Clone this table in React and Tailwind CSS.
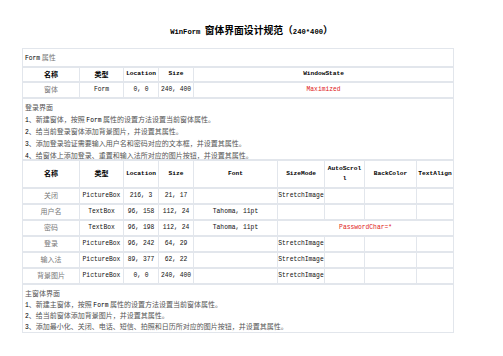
const cols = [57, 44, 35, 35, 84, 47, 40, 52, 37];

const rows = [
  ['关闭', 'PictureBox', '216, 3', '21, 17', '', 'StretchImage', '', '', ''],
  ['用户名', 'TextBox', '96, 158', '112, 24', 'Tahoma, 11pt', '', '', '', ''],
  ['密码', 'TextBox', '96, 198', '112, 24', 'Tahoma, 11pt', 'PasswordChar=*'],
  ['登录', 'PictureBox', '96, 242', '64, 29', '', 'StretchImage', '', '', ''],
  ['输入法', 'PictureBox', '89, 377', '62, 22', '', 'StretchImage', '', '', ''],
  ['背景图片', 'PictureBox', '0, 0', '240, 400', '', 'StretchImage', '', '', ''],
];

// Latin words inside Chinese lines
function Latin({ children }) {
  return <span className="font-['Liberation_Mono'] text-[6.3px] leading-none text-black">{children}</span>;
}

const cell = 'border-x border-y-2 border-[#e2e6ec] text-center align-middle p-0';
const latinCell = `${cell} font-['Liberation_Mono'] text-[6.3px] text-[#111]`;
const nameCell = `${cell} text-[7px] text-[#777]`;
const headCell = `${cell} font-bold text-[7px] text-black`;
const headLatin = `${cell} font-bold font-['Liberation_Mono'] text-[6.2px] text-black`;

export default function App() {
  return (
    <div className="w-[503px] h-[356px] bg-white font-['Noto_Sans_CJK_SC',sans-serif]">
      {/* Title */}
      <div className="pt-[24px] h-[48px] text-center text-[9.8px] leading-[12px] font-bold text-black">
        <span className="font-['Liberation_Mono'] text-[7.2px]">WinForm </span>
        窗体界面设计规范（<span className="font-['Liberation_Mono'] text-[7.2px]">240*400</span>）
      </div>

      <table className="ml-[22px] w-[431px] table-fixed border-collapse border border-[#e2e6ec]">
        <colgroup>
          {cols.map((w, i) => (
            <col key={i} style={{ width: w }} />
          ))}
        </colgroup>
        <tbody>
          <tr className="h-[18px]">
            <td colSpan={9} className="border border-[#e2e6ec] px-[2px] text-[7px] text-[#777]">
              <Latin>Form</Latin> 属性
            </td>
          </tr>
          <tr className="h-[15px]">
            <td className={headCell}>名称</td>
            <td className={headCell}>类型</td>
            <td className={headLatin}>Location</td>
            <td className={headLatin}>Size</td>
            <td colSpan={5} className={headLatin}>WindowState</td>
          </tr>
          <tr className="h-[16px]">
            <td className={nameCell}>窗体</td>
            <td className={latinCell}>Form</td>
            <td className={latinCell}>0, 0</td>
            <td className={latinCell}>240, 400</td>
            <td colSpan={5} className={`${latinCell} !text-[#e02020]`}>Maximized</td>
          </tr>
          <tr className="h-[60px]">
            <td colSpan={9} className="border border-[#e2e6ec] px-[2px] pt-[2px] text-[7px] leading-[12px] text-[#555] align-top">
              <div className="h-[12px]">登录界面</div>
              <div className="h-[12px]"><Latin>1</Latin>、新建窗体，按照 <Latin>Form</Latin> 属性的设置方法设置当前窗体属性。</div>
              <div className="h-[12px]"><Latin>2</Latin>、给当前登录窗体添加背景图片，并设置其属性。</div>
              <div className="h-[12px]"><Latin>3</Latin>、添加登录验证需要输入用户名和密码对应的文本框，并设置其属性。</div>
              <div className="h-[10px]"><Latin>4</Latin>、给窗体上添加登录、重置和输入法所对应的图片按钮，并设置其属性。</div>
            </td>
          </tr>
          <tr className="h-[28px]">
            <td className={headCell}>名称</td>
            <td className={headCell}>类型</td>
            <td className={headLatin}>Location</td>
            <td className={headLatin}>Size</td>
            <td className={headLatin}>Font</td>
            <td className={headLatin}>SizeMode</td>
            <td className={`${headLatin} leading-[10px]`}>
              AutoScrol
              <br />l
            </td>
            <td className={headLatin}>BackColor</td>
            <td className={headLatin}>TextAlign</td>
          </tr>
          {rows.map((r, i) => (
            <tr key={i} className="h-[16px]">
              <td className={nameCell}>{r[0]}</td>
              <td className={latinCell}>{r[1]}</td>
              <td className={latinCell}>{r[2]}</td>
              <td className={latinCell}>{r[3]}</td>
              <td className={latinCell}>{r[4]}</td>
              {r.length === 6 ? (
                <td colSpan={4} className={`${latinCell} !text-[#e02020]`}>{r[5]}</td>
              ) : (
                <>
                  <td className={latinCell}>{r[5]}</td>
                  <td className={latinCell}>{r[6]}</td>
                  <td className={latinCell}>{r[7]}</td>
                  <td className={latinCell}>{r[8]}</td>
                </>
              )}
            </tr>
          ))}
          <tr className="h-[49px]">
            <td colSpan={9} className="border border-[#e2e6ec] px-[2px] pt-[3px] text-[7px] leading-[11px] text-[#555] align-top">
              <div className="h-[11px]">主窗体界面</div>
              <div className="h-[11px]"><Latin>1</Latin>、新建主窗体，按照 <Latin>Form</Latin> 属性的设置方法设置当前窗体属性。</div>
              <div className="h-[11px]"><Latin>2</Latin>、给当前窗体添加背景图片，并设置其属性。</div>
              <div className="h-[11px]"><Latin>3</Latin>、添加最小化、关闭、电话、短信、拍照和日历所对应的图片按钮，并设置其属性。</div>
            </td>
          </tr>
        </tbody>
      </table>
    </div>
  );
}
